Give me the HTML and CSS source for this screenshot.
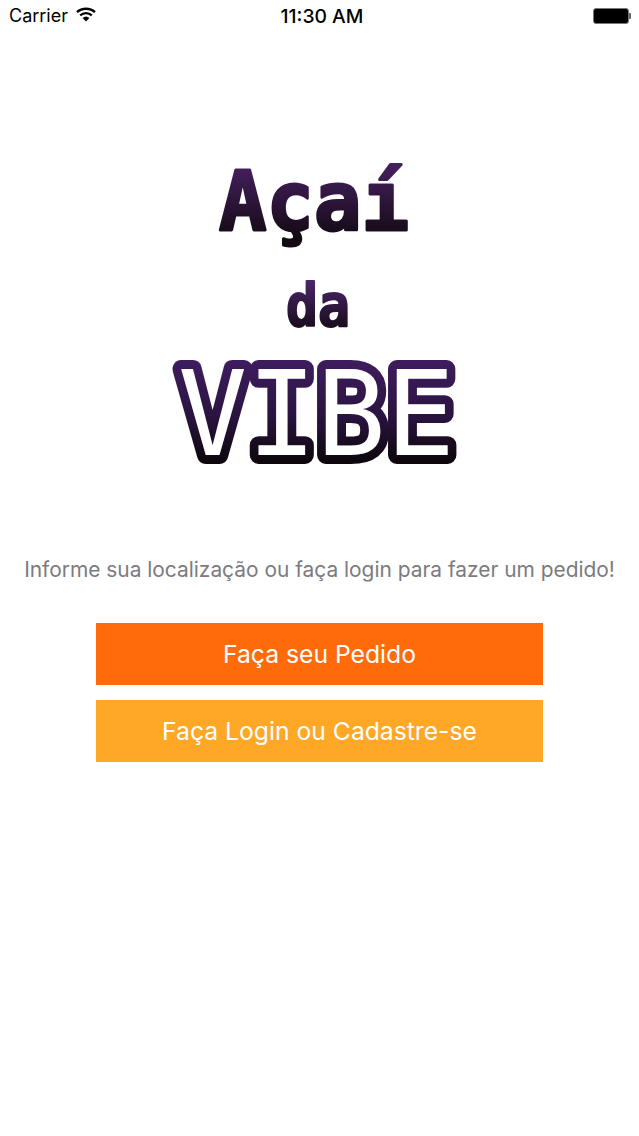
FILE: index.html
```html
<!DOCTYPE html>
<html lang="pt">
<head>
<meta charset="utf-8">
<title>Açaí da Vibe</title>
<link rel="stylesheet" href="styles.css">
</head>
<body>
<div class="screen">
  <header class="status">
    <div class="status-left">
      <span class="carrier">Carrier</span>
      <svg class="wifi" viewBox="0 0 20 15" width="20" height="15" aria-hidden="true">
        <path d="M1 5.2C6 .6 14 .6 19 5.2" class="wifi-arc"/>
        <path d="M4.2 8.4C7.5 5.4 12.5 5.4 15.8 8.4" class="wifi-arc"/>
        <path d="M10 14.5 6.6 11a5 5 0 0 1 6.8 0Z" class="wifi-dot"/>
      </svg>
    </div>
    <span class="clock">11:30 AM</span>
    <div class="status-right">
      <span class="battery"></span><span class="battery-tip"></span>
    </div>
  </header>

  <svg class="logo" viewBox="0 0 639 460" width="639" height="460" role="img" aria-label="Açaí da VIBE">
    <defs>
      <linearGradient id="g1" gradientUnits="userSpaceOnUse" x1="0" y1="128" x2="0" y2="200">
        <stop offset="0" stop-color="#45205f"/>
        <stop offset="1" stop-color="#140a14"/>
      </linearGradient>
      <linearGradient id="g3" gradientUnits="userSpaceOnUse" x1="0" y1="245" x2="0" y2="295">
        <stop offset="0" stop-color="#4a2568"/>
        <stop offset="1" stop-color="#140a14"/>
      </linearGradient>
      <linearGradient id="g2" gradientUnits="userSpaceOnUse" x1="0" y1="320" x2="0" y2="426">
        <stop offset="0" stop-color="#3f1d60"/>
        <stop offset="0.55" stop-color="#2a1440"/>
        <stop offset="1" stop-color="#0c060a"/>
      </linearGradient>
    </defs>
    <text x="219" y="193" class="logo-acai" textLength="190" lengthAdjust="spacingAndGlyphs" fill="url(#g1)" stroke="url(#g1)">Açaí</text>
    <text x="286" y="289" class="logo-da" textLength="64" lengthAdjust="spacingAndGlyphs" fill="url(#g3)" stroke="url(#g3)">da</text>
    <text x="178" y="418" class="logo-vibe" textLength="277" lengthAdjust="spacingAndGlyphs" stroke="url(#g2)">VIBE</text>
  </svg>

  <main class="content">
    <p class="message">Informe sua localização ou faça login para fazer um pedido!</p>
    <div class="actions">
      <a class="btn btn-primary">Faça seu Pedido</a>
      <a class="btn btn-secondary">Faça Login ou Cadastre-se</a>
    </div>
  </main>
</div>
</body>
</html>
```

FILE: styles.css
```css
* { box-sizing: border-box; }

html, body {
  margin: 0;
  padding: 0;
  background: #fff;
}

.screen {
  width: 639px;
  height: 1136px;
  overflow: hidden;
  font-family: Inter, Roboto, "Liberation Sans", sans-serif;
}

.status {
  height: 32px;
  padding: 0 8px 0 9px;
  display: grid;
  grid-template-columns: 1fr auto 1fr;
  align-items: center;
  color: #000;
}

.status-left {
  display: flex;
  align-items: center;
  gap: 8px;
}

.carrier {
  font-size: 18px;
  line-height: 20px;
}

.clock {
  margin-left: 4px;
  font-size: 19.3px;
  font-weight: 500;
  line-height: 20px;
}

.wifi { margin-top: -3px; }
.wifi-arc { fill: none; stroke: #000; stroke-width: 2.4; }
.wifi-dot { fill: #000; }

.status-right {
  display: flex;
  align-items: center;
  justify-content: flex-end;
}

.battery {
  width: 36px;
  height: 16px;
  background: #000;
  border: 1px solid #777;
  border-radius: 3px;
}

.battery-tip {
  width: 2px;
  height: 6px;
  background: #666;
  border-radius: 0 1px 1px 0;
}

.logo {
  display: block;
  margin-top: 5px;
}

.logo-acai {
  font-family: "DejaVu Sans Mono", monospace;
  font-weight: 700;
  font-size: 82px;
  stroke-width: 3;
  stroke-linejoin: round;
}

.logo-da {
  font-family: "DejaVu Sans Mono", monospace;
  font-weight: 700;
  font-size: 58px;
  stroke-width: 2;
  stroke-linejoin: round;
}

.logo-vibe {
  font-family: "DejaVu Sans Mono", monospace;
  font-weight: 400;
  font-size: 118px;
  fill: #fff;
  stroke-width: 18;
  stroke-linejoin: round;
  paint-order: stroke;
}

.content {
  padding-top: 58px;
  display: flex;
  flex-direction: column;
  align-items: center;
}

.message {
  margin: 0;
  font-size: 20.9px;
  line-height: 30px;
  color: #7b7b80;
  white-space: nowrap;
}

.actions {
  margin-top: 38px;
  width: 447px;
  display: flex;
  flex-direction: column;
  gap: 15px;
}

.btn {
  height: 62px;
  display: flex;
  align-items: center;
  justify-content: center;
  color: #fff;
  font-size: 24.7px;
  text-decoration: none;
}

.btn-primary { background: #ff6b0b; }
.btn-secondary { background: #ffa726; }
```
